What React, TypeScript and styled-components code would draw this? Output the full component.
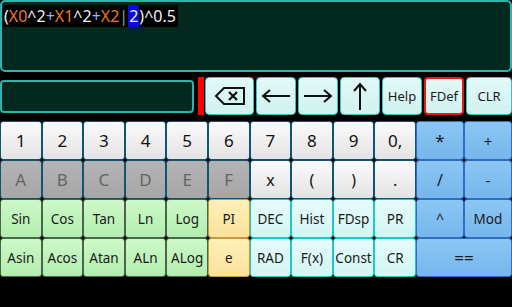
import styled, { createGlobalStyle } from "styled-components";

const GlobalStyle = createGlobalStyle`
  html, body {
    margin: 0;
    padding: 0;
    background: #000;
  }
  body {
    font-family: "Noto Sans", "Open Sans", sans-serif;
  }
`;

type Tone = "num" | "hex" | "fn" | "const" | "mode" | "op";

const tones: Record<Tone, { top: string; bottom: string; border: string; text: string }> = {
  num: { top: "#fbfbfb", bottom: "#e4e2e2", border: "#0f5570", text: "#111" },
  hex: { top: "#b4b4b4", bottom: "#a6a6a6", border: "#0f5570", text: "#646464" },
  fn: { top: "#cdf8c8", bottom: "#b2eeae", border: "#4c644c", text: "#1a1a1a" },
  const: { top: "#fef0b8", bottom: "#fae19c", border: "#c49a3c", text: "#1a1a1a" },
  mode: { top: "#e6fbfa", bottom: "#d2f5f3", border: "#1ec8c4", text: "#1a1a1a" },
  op: { top: "#8cc6f4", bottom: "#76b6ec", border: "#2c6fc4", text: "#1a1a1a" },
};

const Screen = styled.div`
  width: 512px;
  height: 307px;
  background: #000;
  overflow: hidden;
`;

const Display = styled.div`
  box-sizing: border-box;
  height: 72px;
  border: 2px solid #2bb3ad;
  border-radius: 5px;
  background: #03291e;
  padding: 3px 1px;
`;

const Expression = styled.span`
  display: inline-block;
  background: #000;
  font-size: 16px;
  line-height: 22px;
  padding: 0 2px 0 1px;
  color: #f2f2f2;
`;

const Token = styled.span<{ $kind: "var" | "op" | "plain" | "sel" | "cursor" }>`
  color: ${(p) =>
    p.$kind === "var" ? "#e8782c" : p.$kind === "op" ? "#8cb8ec" : p.$kind === "cursor" ? "#9a9a9a" : "#f2f2f2"};
  background: ${(p) => (p.$kind === "sel" ? "#0a0ae6" : "transparent")};
  padding: ${(p) => (p.$kind === "sel" ? "0 1px" : "0")};
`;

const ControlRow = styled.div`
  display: flex;
  align-items: stretch;
  height: 38px;
  margin-top: 5px;
`;

const InputBox = styled.div`
  box-sizing: border-box;
  width: 196px;
  margin: 3px 0 2px;
  border: 2px solid #2bb3ad;
  border-radius: 4px;
  background: #03291e;
`;

const RedMark = styled.div`
  width: 6px;
  margin-left: 4px;
  background: #f00;
`;

const Tools = styled.div`
  display: flex;
  gap: 2px;
  margin-left: 1px;
  flex: 1;
`;

const ToolButton = styled.div<{ $w: number; $active?: boolean }>`
  box-sizing: border-box;
  width: ${(p) => p.$w}px;
  display: flex;
  align-items: center;
  justify-content: center;
  border: ${(p) => (p.$active ? "2px solid #e81818" : "1px solid #38c4bc")};
  border-radius: 4px;
  background: linear-gradient(#e2f9f7, #d0f2ef);
  color: #1a1a1a;
  font-size: 13px;
`;

const KeyGrid = styled.div`
  display: grid;
  grid-template-columns: repeat(10, 41.6px) 48px 48px;
  grid-auto-rows: 39px;
  margin-top: 6px;
`;

const Key = styled.div<{ $tone: Tone; $span?: number; $size?: number }>`
  box-sizing: border-box;
  grid-column: span ${(p) => p.$span ?? 1};
  display: flex;
  align-items: center;
  justify-content: center;
  border: 1.5px solid ${(p) => tones[p.$tone].border};
  border-radius: 3px;
  background: linear-gradient(${(p) => tones[p.$tone].top}, ${(p) => tones[p.$tone].bottom});
  color: ${(p) => tones[p.$tone].text};
  font-size: ${(p) => p.$size ?? 13.5}px;
`;

type KeyDef = { label: string; tone: Tone; span?: number; size?: number };

const big = 17;

const keys: KeyDef[] = [
  ..."123456".split("").map((l) => ({ label: l, tone: "num" as Tone, size: big })),
  ...["7", "8", "9", "0,"].map((l) => ({ label: l, tone: "num" as Tone, size: big })),
  { label: "*", tone: "op", size: big },
  { label: "+", tone: "op", size: 15 },
  ..."ABCDEF".split("").map((l) => ({ label: l, tone: "hex" as Tone, size: big })),
  ...["x", "(", ")", "."].map((l) => ({ label: l, tone: "num" as Tone, size: 16 })),
  { label: "/", tone: "op", size: 16 },
  { label: "-", tone: "op", size: 15 },
  ...["Sin", "Cos", "Tan", "Ln", "Log"].map((l) => ({ label: l, tone: "fn" as Tone })),
  { label: "PI", tone: "const" },
  ...["DEC", "Hist", "FDsp", "PR"].map((l) => ({ label: l, tone: "mode" as Tone })),
  { label: "^", tone: "op", size: 14 },
  { label: "Mod", tone: "op" },
  ...["Asin", "Acos", "Atan", "ALn", "ALog"].map((l) => ({ label: l, tone: "fn" as Tone })),
  { label: "e", tone: "const" },
  ...["RAD", "F(x)", "Const", "CR"].map((l) => ({ label: l, tone: "mode" as Tone })),
  { label: "==", tone: "op", span: 2, size: 17 },
];

const BackspaceIcon = () => (
  <svg width="32" height="20" viewBox="0 0 32 20">
    <path d="M10 2 H30 V18 H10 L2 10 Z" fill="none" stroke="#111" strokeWidth="2" strokeLinejoin="miter" />
    <path d="M15 6 L23 14 M23 6 L15 14" stroke="#111" strokeWidth="2.2" />
  </svg>
);

const Arrow = ({ dir }: { dir: "left" | "right" | "up" }) => {
  if (dir === "up") {
    return (
      <svg width="14" height="30" viewBox="0 0 14 30">
        <path d="M7 29 V3 M1 10 L7 3 L13 10" fill="none" stroke="#111" strokeWidth="2" />
      </svg>
    );
  }
  const d = dir === "left" ? "M30 8 H3 M10 2 L3 8 L10 14" : "M2 8 H29 M22 2 L29 8 L22 14";
  return (
    <svg width="32" height="16" viewBox="0 0 32 16">
      <path d={d} fill="none" stroke="#111" strokeWidth="2" />
    </svg>
  );
};

export default function App() {
  return (
    <Screen>
      <GlobalStyle />
      <Display>
        <Expression>
          <Token $kind="plain">(</Token>
          <Token $kind="var">X0</Token>
          <Token $kind="plain">^2</Token>
          <Token $kind="op">+</Token>
          <Token $kind="var">X1</Token>
          <Token $kind="plain">^2</Token>
          <Token $kind="op">+</Token>
          <Token $kind="var">X2</Token>
          <Token $kind="cursor">|</Token>
          <Token $kind="sel">2</Token>
          <Token $kind="plain">)^0.5</Token>
        </Expression>
      </Display>
      <ControlRow>
        <InputBox />
        <RedMark />
        <Tools>
          <ToolButton $w={49}>
            <BackspaceIcon />
          </ToolButton>
          <ToolButton $w={40}>
            <Arrow dir="left" />
          </ToolButton>
          <ToolButton $w={40}>
            <Arrow dir="right" />
          </ToolButton>
          <ToolButton $w={40}>
            <Arrow dir="up" />
          </ToolButton>
          <ToolButton $w={40}>Help</ToolButton>
          <ToolButton $w={40} $active>
            FDef
          </ToolButton>
          <ToolButton $w={46}>CLR</ToolButton>
        </Tools>
      </ControlRow>
      <KeyGrid>
        {keys.map((k, i) => (
          <Key key={i} $tone={k.tone} $span={k.span} $size={k.size}>
            {k.label}
          </Key>
        ))}
      </KeyGrid>
    </Screen>
  );
}
